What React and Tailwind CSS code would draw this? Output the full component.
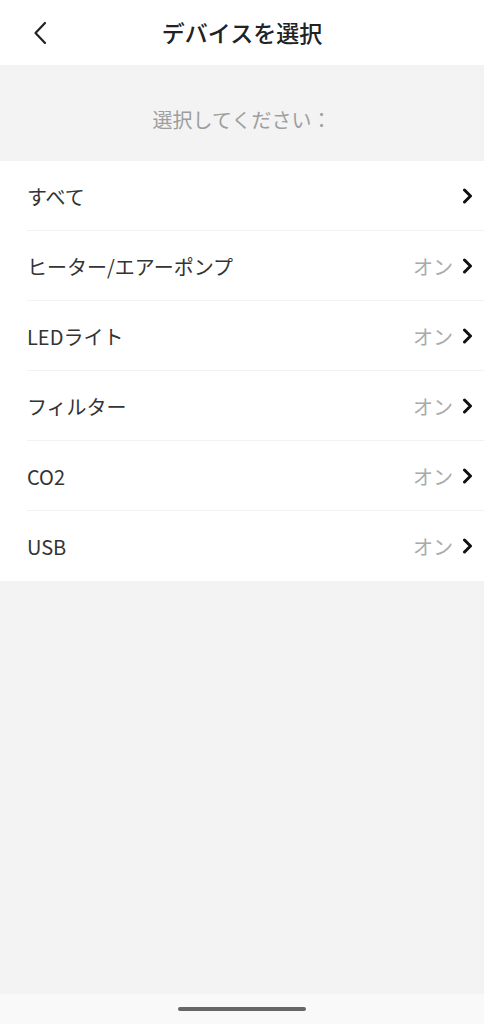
const devices = [
    { name: "すべて", status: "" },
    { name: "ヒーター/エアーポンプ", status: "オン" },
    { name: "LEDライト", status: "オン" },
    { name: "フィルター", status: "オン" },
    { name: "CO2", status: "オン" },
    { name: "USB", status: "オン" },
];

const BackIcon = () => (
    <svg width="14" height="24" viewBox="0 0 14 24" fill="none">
        <path d="M12 2L2.5 12L12 22" stroke="#222" strokeWidth="2.2" strokeLinecap="round" strokeLinejoin="round" />
    </svg>
);

const ArrowIcon = () => (
    <svg width="11" height="16" viewBox="0 0 11 16" fill="none">
        <path d="M2.5 2L8.5 8L2.5 14" stroke="#111" strokeWidth="3" strokeLinecap="round" strokeLinejoin="round" />
    </svg>
);

const SelectDevice = () => {
    return (
        <div
            className="min-h-screen flex flex-col bg-[#f3f3f3]"
            style={{ fontFamily: '"Noto Sans CJK JP", "Noto Sans", sans-serif' }}
        >
            {/* Header */}
            <header className="h-[65px] bg-white flex items-center relative">
                <button className="absolute left-[33px] top-[21px]">
                    <BackIcon />
                </button>
                <h1 className="w-full text-center text-[23px] font-medium text-[#222] leading-none">
                    デバイスを選択
                </h1>
            </header>

            {/* Prompt */}
            <div className="h-[96px] pt-[14px] flex items-center justify-center">
                <p className="text-[20px] text-[#9e9e9e] leading-none">選択してください：</p>
            </div>

            {/* Device list */}
            <ul className="bg-white">
                {devices.map((d, i) => (
                    <li key={d.name} className="pl-[27px]">
                        <div
                            className={`h-[70px] flex items-center pr-[11px] ${
                                i < devices.length - 1 ? "border-b border-[#f2f2f2]" : ""
                            }`}
                        >
                            <span className="flex-1 text-[20px] text-[#333] leading-none pt-[2px]">{d.name}</span>
                            {d.status && (
                                <span className="text-[20px] text-[#aaaaaa] leading-none mr-[9px] pt-[2px]">{d.status}</span>
                            )}
                            <ArrowIcon />
                        </div>
                    </li>
                ))}
            </ul>

            <div className="flex-1" />

            {/* System nav bar */}
            <div className="h-[30px] bg-[#f9f9f9] flex items-center justify-center">
                <div className="w-[128px] h-[4px] rounded-full bg-[#666]" />
            </div>
        </div>
    );
};

export default SelectDevice;
